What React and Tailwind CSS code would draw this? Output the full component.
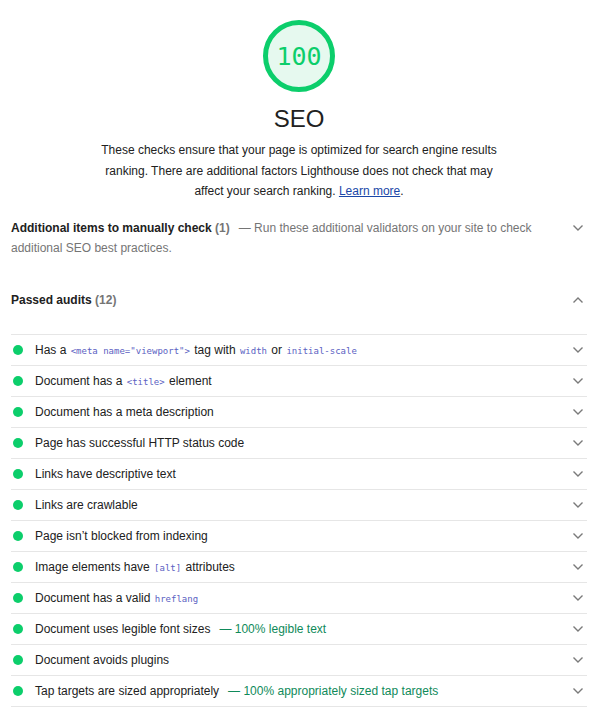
import React from "react";

const Chevron = ({ up }) => (
  <svg width="12" height="8" viewBox="0 0 12 8" className="shrink-0">
    <polyline
      points={up ? "1.5,6.5 6,2 10.5,6.5" : "1.5,1.5 6,6 10.5,1.5"}
      fill="none"
      stroke="#7a7a7a"
      strokeWidth="1.4"
    />
  </svg>
);

const Code = ({ children }) => (
  <code className="font-['DejaVu_Sans_Mono',monospace] text-[9px] text-[#5b5fc2] px-[1px]">{children}</code>
);

const rows = [
  <>Has a <Code>&lt;meta name="viewport"&gt;</Code> tag with <Code>width</Code> or <Code>initial-scale</Code></>,
  <>Document has a <Code>&lt;title&gt;</Code> element</>,
  <>Document has a meta description</>,
  <>Page has successful HTTP status code</>,
  <>Links have descriptive text</>,
  <>Links are crawlable</>,
  <>Page isn’t blocked from indexing</>,
  <>Image elements have <Code>[alt]</Code> attributes</>,
  <>Document has a valid <Code>hreflang</Code></>,
  <>Document uses legible font sizes<span className="text-[#0f8a5a] ml-[9px]">— 100% legible text</span></>,
  <>Document avoids plugins</>,
  <>Tap targets are sized appropriately<span className="text-[#0f8a5a] ml-[9px]">— 100% appropriately sized tap targets</span></>,
];

export default function App() {
  return (
    <div className="w-[599px] h-[715px] bg-white font-['Liberation_Sans',Arial,sans-serif] text-[12px] text-[#212121] pl-[11px] pr-[12px] overflow-hidden">
      <div className="flex flex-col items-center pt-[18px]">
        <svg width="76" height="76" viewBox="0 0 76 76">
          <circle cx="38" cy="38" r="33.5" fill="#e6f9ef" stroke="#0cce6b" strokeWidth="5" />
          <text x="38" y="47" textAnchor="middle" fill="#0cce6b" fontSize="25" fontFamily="'DejaVu Sans Mono', monospace">100</text>
        </svg>
        <div className="text-[24px] leading-[28px] mt-[11px] text-[#212121]">SEO</div>
        <p className="mt-[7px] w-[404px] text-center text-[12px] leading-[20.5px]">
          These checks ensure that your page is optimized for search engine results ranking. There are additional factors Lighthouse does not check that may affect your search ranking.{" "}
          <a className="text-[#1a47a8] underline">Learn more</a>.
        </p>
      </div>

      <div className="mt-[16px] flex items-start justify-between">
        <div className="w-[530px] leading-[20px]">
          <span className="font-bold">Additional items to manually check</span>
          <span className="text-[#757575] font-bold"> (1)</span>
          <span className="text-[#757575] ml-[9px]">— Run these additional validators on your site to check additional SEO best practices.</span>
        </div>
        <div className="pt-[6px] pr-[3px]"><Chevron /></div>
      </div>

      <div className="mt-[32px] flex items-center justify-between h-[20px]">
        <div>
          <span className="font-bold">Passed audits</span>
          <span className="text-[#757575] font-bold"> (12)</span>
        </div>
        <div className="pr-[3px]"><Chevron up /></div>
      </div>

      <div className="mt-[24px] border-b border-[#e6e6e6]">
        {rows.map((r, i) => (
          <div key={i} className="h-[31px] border-t border-[#e6e6e6] flex items-center">
            <span className="w-[10px] h-[10px] rounded-full bg-[#0cce6b] ml-[2px] mr-[12px] shrink-0" />
            <div className="flex-1 whitespace-nowrap">{r}</div>
            <div className="pr-[3px]"><Chevron /></div>
          </div>
        ))}
      </div>
    </div>
  );
}
